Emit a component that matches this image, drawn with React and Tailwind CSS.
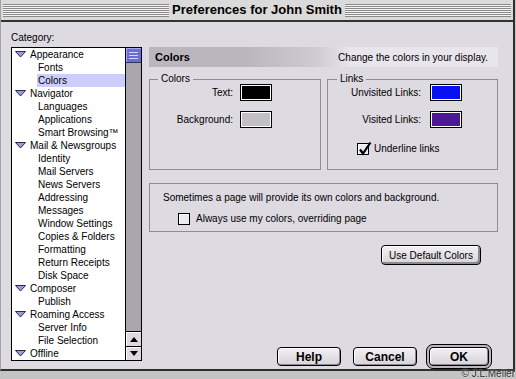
import React from "react";

const tree = [
  { label: "Appearance", parent: true },
  { label: "Fonts" },
  { label: "Colors", selected: true },
  { label: "Navigator", parent: true },
  { label: "Languages" },
  { label: "Applications" },
  { label: "Smart Browsing™" },
  { label: "Mail & Newsgroups", parent: true },
  { label: "Identity" },
  { label: "Mail Servers" },
  { label: "News Servers" },
  { label: "Addressing" },
  { label: "Messages" },
  { label: "Window Settings" },
  { label: "Copies & Folders" },
  { label: "Formatting" },
  { label: "Return Receipts" },
  { label: "Disk Space" },
  { label: "Composer", parent: true },
  { label: "Publish" },
  { label: "Roaming Access", parent: true },
  { label: "Server Info" },
  { label: "File Selection" },
  { label: "Offline", parent: true },
];

function Disclosure() {
  return (
    <svg width="11" height="7" viewBox="0 0 11 7" className="shrink-0">
      <polygon points="0.5,0.5 10.5,0.5 5.5,6" fill="#9a9ae0" stroke="#2a2a4a" strokeWidth="1" />
    </svg>
  );
}

function TreeRow({ item }) {
  if (item.parent) {
    return (
      <div className="flex h-[13px] items-center leading-[13px]">
        <div className="ml-[3px] mr-[4px]">
          <Disclosure />
        </div>
        <span>{item.label}</span>
      </div>
    );
  }
  return (
    <div className="flex h-[13px] items-center leading-[13px]">
      <div className={`ml-[25px] h-full flex-1 pl-[1px] ${item.selected ? "bg-[#cccdfb]" : ""}`}>{item.label}</div>
    </div>
  );
}

function Swatch({ fill }) {
  return (
    <div className="h-[17px] w-[32px] border border-black bg-white p-[1px]">
      <div className={`h-full w-full ${fill}`} />
    </div>
  );
}

function Checkbox({ checked }) {
  return (
    <div className="relative h-[12px] w-[12px] shrink-0 border border-black bg-[#ecebef] shadow-[inset_1px_1px_0_#fff]">
      {checked && (
        <svg width="16" height="16" viewBox="0 0 16 16" className="absolute left-[-1px] top-[-3px]">
          <path d="M3 8.5 L6 12.5 L13.5 1.5" fill="none" stroke="#000" strokeWidth="2.2" />
        </svg>
      )}
    </div>
  );
}

function MacButton({ children, className }) {
  return (
    <div
      className={`flex items-center justify-center rounded-[4px] border border-black bg-[linear-gradient(#f2f0f4,#d6d4da)] shadow-[inset_1px_1px_0_#fff,inset_-1px_-1px_0_#8c8a90] ${className}`}
    >
      {children}
    </div>
  );
}

function Stripes() {
  return (
    <div className="h-[13px] flex-1 bg-[repeating-linear-gradient(to_bottom,#8a8a8a_0px,#8a8a8a_1px,#f4f4f4_1px,#f4f4f4_2px)]" />
  );
}

export default function App() {
  return (
    <div className="relative h-[379px] w-[516px] overflow-hidden bg-[#c4c4c4] font-['Liberation_Sans',Arial,sans-serif] text-[10px] text-black">
      <div className="flex h-[371px] w-[515px] flex-col border-b-2 border-l border-r-2 border-b-[#2e2e2e] border-l-[#a4a2a8] border-r-[#2e2e2e] bg-[#dddae1]">
        {/* title bar */}
        <div className="flex h-[22px] shrink-0 items-center gap-[3px] border-b-2 border-b-[#333] bg-[#dadada] px-[2px]">
          <Stripes />
          <div className="text-[13px] font-bold leading-[16px]">Preferences for John Smith</div>
          <Stripes />
        </div>

        <div className="flex flex-1">
          {/* category list */}
          <div className="ml-[10px] flex w-[131px] flex-col pt-[10px]">
            <div className="h-[12px] leading-[12px]">Category:</div>
            <div className="mt-[3px] flex h-[314px] border border-black">
              <div className="flex-1 overflow-hidden bg-white">
                {tree.map((item) => (
                  <TreeRow key={item.label} item={item} />
                ))}
              </div>
              <div className="flex w-[16px] flex-col border-l border-black bg-[#aaa6ae]">
                <div className="flex h-[15px] flex-col justify-center gap-[2px] border-b border-[#33335a] bg-[#6c6cd8] px-[3px] shadow-[inset_1px_1px_0_#a8a8f4]">
                  <div className="h-[1px] bg-[#d8d8ff]" />
                  <div className="h-[1px] bg-[#d8d8ff]" />
                  <div className="h-[1px] bg-[#d8d8ff]" />
                </div>
                <div className="flex-1" />
                <div className="flex h-[15px] items-center justify-center border-t border-black bg-[#dcdae0] shadow-[inset_1px_1px_0_#fff]">
                  <svg width="8" height="5" viewBox="0 0 8 5">
                    <polygon points="0,5 8,5 4,0" fill="#000" />
                  </svg>
                </div>
                <div className="flex h-[14px] items-center justify-center border-t border-black bg-[#dcdae0] shadow-[inset_1px_1px_0_#fff]">
                  <svg width="8" height="5" viewBox="0 0 8 5">
                    <polygon points="0,0 8,0 4,5" fill="#000" />
                  </svg>
                </div>
              </div>
            </div>
          </div>

          {/* settings panel */}
          <div className="ml-[7px] flex w-[349px] flex-col pt-[25px]">
            <div className="flex h-[20px] items-center justify-between bg-[linear-gradient(to_right,#bab6be_0%,#bab6be_28%,#cfcbd3_48%,#e8e5ec_58%,#e8e5ec_100%)] pl-[6px] pr-[10px]">
              <span className="text-[11px] font-bold">Colors</span>
              <span>Change the colors in your display.</span>
            </div>

            <div className="mt-[12px] flex h-[91px] gap-[6px]">
              <div className="flex w-[172px] flex-col border border-[#8e8b93]">
                <div className="-mt-[6px] ml-[8px] w-fit bg-[#dddae1] px-[3px] leading-[10px]">Colors</div>
                <div className="flex h-[17px] items-center">
                  <span className="w-[83px] text-right">Text:</span>
                  <div className="ml-[7px]">
                    <Swatch fill="bg-black" />
                  </div>
                </div>
                <div className="mt-[10px] flex h-[17px] items-center">
                  <span className="w-[83px] text-right">Background:</span>
                  <div className="ml-[7px]">
                    <Swatch fill="bg-[#c2c0c4]" />
                  </div>
                </div>
              </div>

              <div className="flex w-[171px] flex-col border border-[#8e8b93]">
                <div className="-mt-[6px] ml-[9px] w-fit bg-[#dddae1] px-[3px] leading-[10px]">Links</div>
                <div className="flex h-[17px] items-center">
                  <span className="w-[93px] text-right">Unvisited Links:</span>
                  <div className="ml-[9px]">
                    <Swatch fill="bg-[#0a10f2]" />
                  </div>
                </div>
                <div className="mt-[10px] flex h-[17px] items-center">
                  <span className="w-[93px] text-right">Visited Links:</span>
                  <div className="ml-[9px]">
                    <Swatch fill="bg-[#4b1896]" />
                  </div>
                </div>
                <div className="ml-[29px] mt-[13px] flex items-center gap-[5px]">
                  <Checkbox checked />
                  <span>Underline links</span>
                </div>
              </div>
            </div>

            <div className="mt-[13px] flex h-[49px] flex-col border border-[#8e8b93] pl-[13px] pt-[8px]">
              <div className="leading-[12px]">Sometimes a page will provide its own colors and background.</div>
              <div className="ml-[15px] mt-[7px] flex items-center gap-[6px]">
                <Checkbox />
                <span>Always use my colors, overriding page</span>
              </div>
            </div>

            <div className="mr-[17px] mt-[13px] self-end">
              <MacButton className="h-[20px] w-[100px] shadow-[inset_1px_1px_0_#fff,inset_-2px_-2px_0_#8c8a90]">
                Use Default Colors
              </MacButton>
            </div>

            <div className="mr-[6px] mt-[79px] flex h-[25px] items-start justify-end">
              <MacButton className="mt-[3px] h-[19px] w-[64px] text-[12px] font-bold">Help</MacButton>
              <MacButton className="ml-[12px] mt-[3px] h-[19px] w-[64px] text-[12px] font-bold">Cancel</MacButton>
              <div className="ml-[9px] h-[25px] w-[66px] rounded-[7px] border border-black bg-[#b9b6bd] p-[2px]">
                <MacButton className="h-[19px] w-full text-[12px] font-bold">OK</MacButton>
              </div>
            </div>
          </div>
        </div>
      </div>

      <div className="absolute bottom-0 right-0 pr-[1px] text-[10px] leading-[11px] text-[#2a2a2a] [text-shadow:0_0_2px_#fff]">
        © J.L.Meller
      </div>
    </div>
  );
}
